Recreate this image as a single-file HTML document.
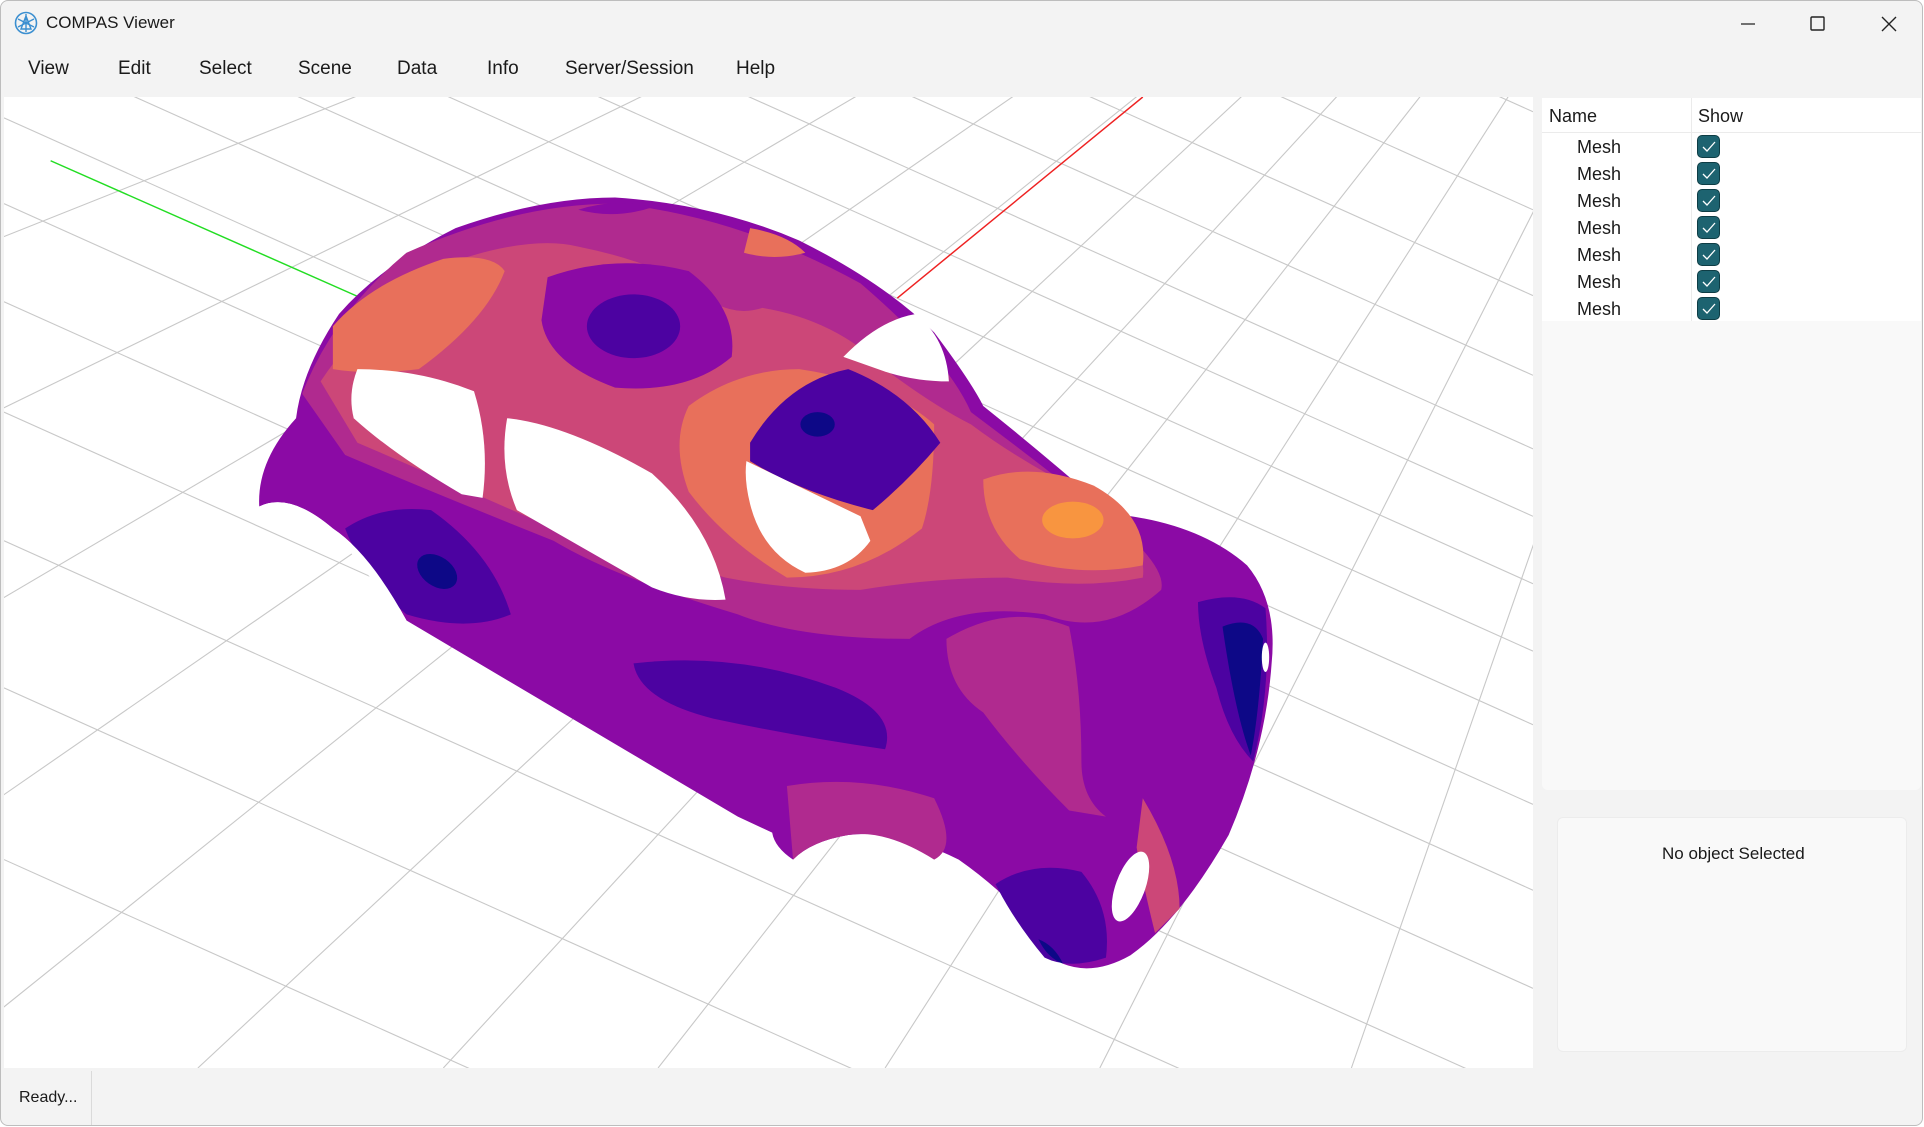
<!DOCTYPE html>
<html><head><meta charset="utf-8"><style>
*{margin:0;padding:0;box-sizing:border-box}
body{width:1924px;height:1127px;background:#fff;font-family:"Liberation Sans",sans-serif;overflow:hidden;position:relative}
.win{position:absolute;left:0;top:0;width:1923px;height:1126px;background:#f3f3f3;border:1px solid #bdbdbd;border-radius:8px;overflow:hidden}
.t{position:absolute;color:#1a1a1a;white-space:nowrap}
.menu{font-size:19px;top:57px}
.vp{position:absolute;left:3px;top:96px;width:1529px;height:971px;background:#fff;overflow:hidden}
.tbl{position:absolute;left:1541px;top:97px;width:379px;height:692px;background:#f9f9f9;border-radius:0 0 6px 6px}
.tblw{position:absolute;left:0;top:0;width:379px;height:223px;background:#fff}
.cb{position:absolute;left:1696px;width:23px;height:23px;background:#1d6370;border:1px solid #0e3d45;border-radius:5px}
.cb svg{position:absolute;left:4px;top:5px}
.info{position:absolute;left:1556px;top:816px;width:350px;height:235px;background:#f9f9f9;border:1px solid #ececec;border-radius:6px}
</style></head><body>
<div class="win">
<svg style="position:absolute;left:13px;top:10px" width="24" height="24" viewBox="0 0 24 24"><circle cx="12" cy="12" r="10.5" fill="none" stroke="#3b8fd0" stroke-width="1.6"/><path d="M12 3 L12 21 M4 8 L20 16 M20 8 L4 16 M7 18 L12 5 L17 18 Z" fill="none" stroke="#3b8fd0" stroke-width="1.4"/></svg>
<div class="t" style="left:45px;top:12px;font-size:17px">COMPAS Viewer</div>
<svg style="position:absolute;left:1738px;top:12px" width="170" height="22" viewBox="0 0 170 22"><path d="M2 11 H16" stroke="#222" stroke-width="1.3"/><rect x="72" y="4" width="13" height="13" fill="none" stroke="#222" stroke-width="1.4" rx="1"/><path d="M143 4 L157 18 M157 4 L143 18" stroke="#222" stroke-width="1.4"/></svg>
<div class="t menu" style="left:27px">View</div>
<div class="t menu" style="left:117px">Edit</div>
<div class="t menu" style="left:198px">Select</div>
<div class="t menu" style="left:297px">Scene</div>
<div class="t menu" style="left:396px">Data</div>
<div class="t menu" style="left:486px">Info</div>
<div class="t menu" style="left:564px">Server/Session</div>
<div class="t menu" style="left:735px">Help</div>

<div class="vp">
<svg width="1529" height="971" viewBox="2 78 1246 792" preserveAspectRatio="none">
<g stroke="#c8c8c8" stroke-width="0.9" fill="none">
<path d="M2 -560 L1248 0 M2 -470 L1248 90 M2 -390 L1248 170 M2 -320 L1248 240 M2 -255 L1248 305 M2 -195 L1248 365 M2 -140 L1248 420 M2 -85 L1248 475 M2 -30 L1248 530 M2 30 L1248 590 M2 95 L1248 655 M2 165 L1248 725 M2 245 L1248 805 M2 335 L1248 895 M2 440 L1248 1000 M2 560 L1248 1120 M2 700 L1248 1260"/>
<path d="M1550 -425 L1100 870 M1550 -425 L895 870 M1550 -425 L720 870 M1550 -425 L535 870 M1550 -425 L360 870 M1550 -425 L160 870 M1550 -425 L-60 870 M1550 -425 L-320 870 M1550 -425 L-650 870 M1550 -425 L-1100 870 M1550 -425 L-1700 870 M1550 -425 L-2500 870"/>
</g>
<path d="M40 130 L300 245" stroke="#22dd22" stroke-width="1.2"/>
<path d="M730 242 L930 78" stroke="#ee2222" stroke-width="1.2"/>
<!-- car body -->
<path d="M210 412 Q208 375 240 340 Q245 300 275 255 Q310 215 370 185 Q440 160 500 160 Q580 165 650 195 Q720 230 760 270 Q790 310 800 330 Q850 370 905 418 Q975 425 1015 460 Q1040 490 1035 540 Q1030 610 1000 680 Q960 750 920 778 Q890 795 865 785 Q830 735 780 700 Q730 675 690 680 Q660 685 645 700 Q630 690 628 678 L600 665 L330 505 Q300 450 270 430 Q235 400 210 412 Z" fill="#8b0aa5"/>
<path d="M245 320 Q270 255 330 205 Q420 165 500 165 Q600 175 700 230 Q770 290 790 335 Q850 380 900 420 Q950 460 945 480 Q900 520 850 500 Q780 490 740 520 Q650 520 600 500 Q500 470 450 440 Q350 400 280 370 Z" fill="#b02a8f"/>
<path d="M260 310 Q300 250 360 215 Q430 190 470 200 Q520 210 560 230 Q590 260 620 250 Q680 260 720 300 Q760 330 790 345 Q830 375 880 400 Q935 440 930 470 Q880 480 820 470 Q760 470 700 480 Q640 480 590 470 L450 430 Q360 390 290 360 Z" fill="#cc4778"/>
<path d="M270 265 Q300 230 360 210 Q400 205 410 220 Q395 260 340 300 Q300 305 270 300 Z" fill="#e8705b"/>
<path d="M560 330 Q600 300 650 300 Q720 310 760 345 Q760 400 750 430 Q700 470 640 470 Q590 440 560 400 Q545 360 560 330 Z" fill="#e8705b"/>
<path d="M800 390 Q840 375 890 395 Q935 420 930 460 Q880 470 830 455 Q800 430 800 390 Z" fill="#e8705b"/>
<ellipse cx="873" cy="423" rx="25" ry="15" fill="#f89540"/>
<path d="M610 185 Q640 190 655 205 Q630 212 605 205 Z" fill="#e8705b"/>
<path d="M445 225 Q500 205 560 220 Q600 250 595 290 Q560 320 500 315 Q445 295 440 260 Z" fill="#8b0aa5"/>
<ellipse cx="515" cy="265" rx="38" ry="26" fill="#4c02a1"/>
<path d="M470 170 Q500 160 530 168 Q500 178 470 170 Z" fill="#8b0aa5"/>
<path d="M610 360 Q640 310 690 300 Q740 320 765 360 Q740 390 710 415 Q650 400 610 375 Z" fill="#4c02a1"/>
<ellipse cx="665" cy="345" rx="14" ry="10" fill="#0d0887"/>
<path d="M280 430 Q310 410 350 415 Q400 450 415 500 Q380 515 330 500 Q295 470 280 430 Z" fill="#4c02a1"/>
<ellipse cx="355" cy="465" rx="18" ry="12" fill="#0d0887" transform="rotate(35 355 465)"/>
<path d="M515 540 Q600 530 680 560 Q730 580 720 610 Q650 600 580 585 Q520 570 515 540 Z" fill="#4c02a1"/>
<path d="M770 520 Q820 490 870 510 Q880 560 880 620 Q880 650 900 665 L870 660 Q830 620 800 580 Q770 560 770 520 Z" fill="#b02a8f"/>
<path d="M975 490 Q1010 480 1030 495 Q1035 560 1020 620 Q1000 600 990 560 Q975 520 975 490 Z" fill="#4c02a1"/>
<path d="M995 510 Q1020 500 1028 520 Q1025 580 1018 615 Q1005 580 995 510 Z" fill="#0d0887"/>
<path d="M810 720 Q840 700 880 710 Q905 740 900 780 Q870 790 850 780 Q825 750 810 720 Z" fill="#4c02a1"/>
<path d="M845 765 Q858 770 865 785 Q852 780 845 765 Z" fill="#0d0887"/>
<path d="M640 640 Q700 630 760 650 Q780 690 760 700 Q720 675 690 680 Q660 685 645 700 Z" fill="#b02a8f"/>
<path d="M930 650 Q960 700 960 740 L940 760 Q930 720 925 690 Z" fill="#cc4778"/>
<!-- windows -->
<path d="M290 300 Q340 300 385 318 Q398 360 392 405 L375 402 Q320 370 287 340 Q282 320 290 300 Z" fill="#fff"/>
<path d="M412 340 Q460 345 530 385 Q580 430 590 488 Q560 490 530 478 L420 415 Q405 380 412 340 Z" fill="#fff"/>
<path d="M607 375 L700 420 L708 440 Q690 465 655 466 Q620 450 610 410 Q605 390 607 375 Z" fill="#fff"/>
<path d="M686 290 Q715 260 745 255 Q770 275 772 310 Q745 310 720 302 Z" fill="#fff"/>
<path d="M210 412 Q235 400 270 430 Q300 450 330 505 L320 500 Q290 450 260 425 Q235 405 212 414 Z" fill="#fff"/>
<ellipse cx="920" cy="722" rx="12" ry="30" fill="#fff" transform="rotate(20 920 722)"/>
<ellipse cx="1030" cy="535" rx="3" ry="12" fill="#fff"/>
</svg>
</div>

<div class="tbl">
<div class="tblw"></div>
<div style="position:absolute;left:0;top:34px;width:379px;height:1px;background:#ebebeb"></div>
<div style="position:absolute;left:149px;top:0;width:1px;height:223px;background:#ebebeb"></div>
</div>
<div class="t" style="left:1548px;top:105px;font-size:18px">Name</div>
<div class="t" style="left:1697px;top:105px;font-size:18px">Show</div>
<div class="t" style="left:1576px;top:136px;font-size:18px">Mesh</div>
<div class="t" style="left:1576px;top:163px;font-size:18px">Mesh</div>
<div class="t" style="left:1576px;top:190px;font-size:18px">Mesh</div>
<div class="t" style="left:1576px;top:217px;font-size:18px">Mesh</div>
<div class="t" style="left:1576px;top:244px;font-size:18px">Mesh</div>
<div class="t" style="left:1576px;top:271px;font-size:18px">Mesh</div>
<div class="t" style="left:1576px;top:298px;font-size:18px">Mesh</div>
<div class="cb" style="top:134px"><svg width="14" height="12" viewBox="0 0 14 12"><path d="M1 6 L5 10 L13 1" fill="none" stroke="#fff" stroke-width="1.3"/></svg></div>
<div class="cb" style="top:161px"><svg width="14" height="12" viewBox="0 0 14 12"><path d="M1 6 L5 10 L13 1" fill="none" stroke="#fff" stroke-width="1.3"/></svg></div>
<div class="cb" style="top:188px"><svg width="14" height="12" viewBox="0 0 14 12"><path d="M1 6 L5 10 L13 1" fill="none" stroke="#fff" stroke-width="1.3"/></svg></div>
<div class="cb" style="top:215px"><svg width="14" height="12" viewBox="0 0 14 12"><path d="M1 6 L5 10 L13 1" fill="none" stroke="#fff" stroke-width="1.3"/></svg></div>
<div class="cb" style="top:242px"><svg width="14" height="12" viewBox="0 0 14 12"><path d="M1 6 L5 10 L13 1" fill="none" stroke="#fff" stroke-width="1.3"/></svg></div>
<div class="cb" style="top:269px"><svg width="14" height="12" viewBox="0 0 14 12"><path d="M1 6 L5 10 L13 1" fill="none" stroke="#fff" stroke-width="1.3"/></svg></div>
<div class="cb" style="top:296px"><svg width="14" height="12" viewBox="0 0 14 12"><path d="M1 6 L5 10 L13 1" fill="none" stroke="#fff" stroke-width="1.3"/></svg></div>

<div class="info"></div>
<div class="t" style="left:1661px;top:843px;font-size:17px">No object Selected</div>

<div style="position:absolute;left:90px;top:1070px;width:1px;height:54px;background:#dadada"></div>
<div class="t" style="left:18px;top:1088px;font-size:16px">Ready...</div>
</div>
</body></html>
